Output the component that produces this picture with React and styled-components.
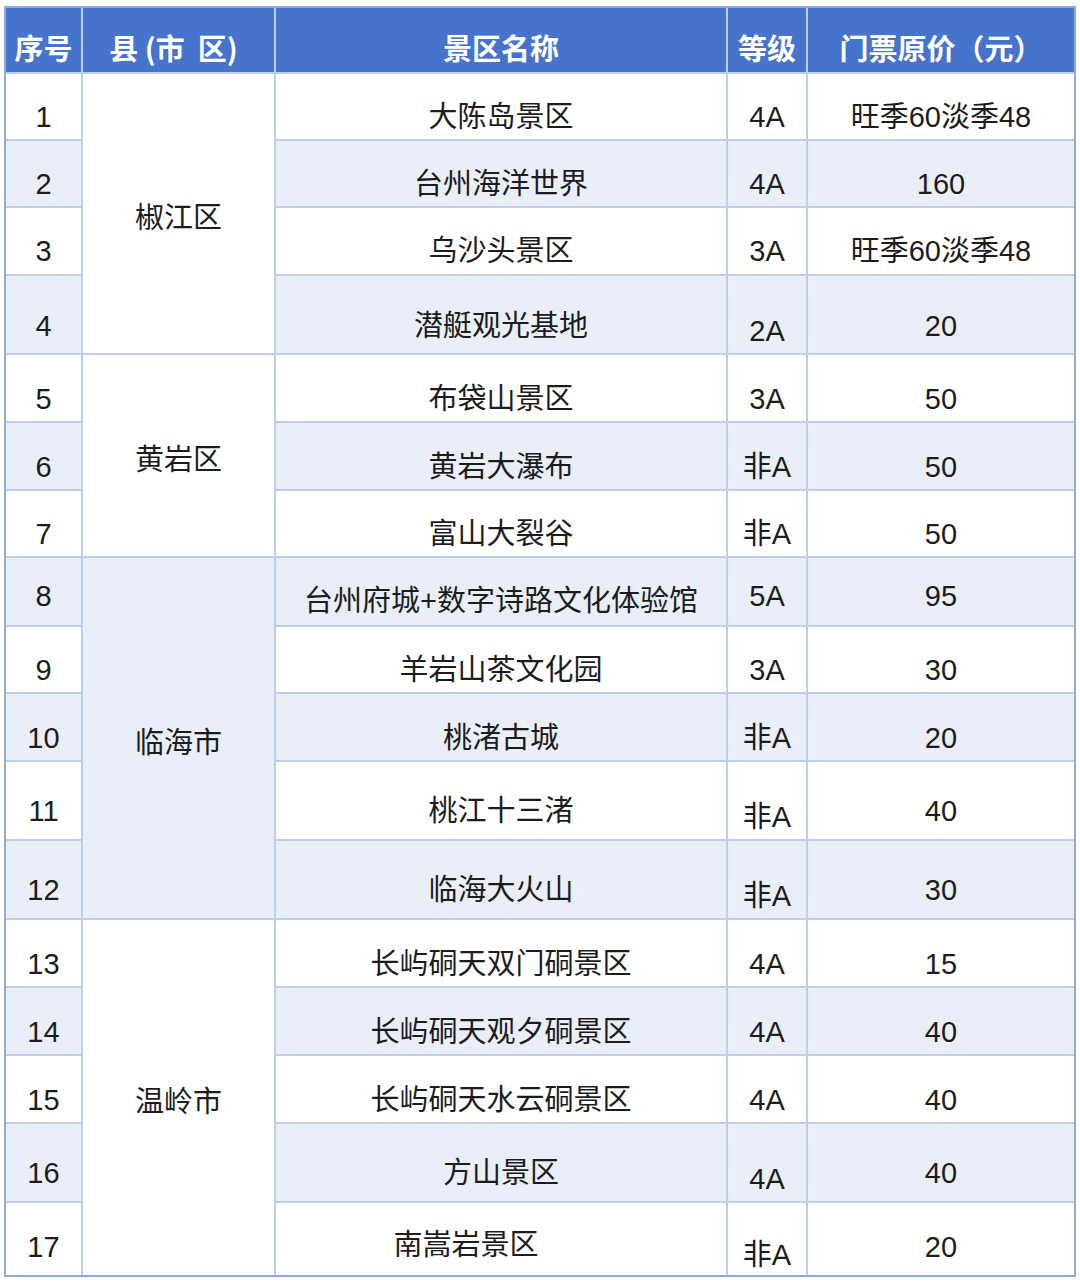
import React from "react";
import styled, { createGlobalStyle } from "styled-components";

const Global = createGlobalStyle`
  html, body { margin: 0; padding: 0; background: #ffffff; }
  body { font-family: "Liberation Sans", "Noto Sans CJK SC", sans-serif; }
`;

const Page = styled.div`
  padding: 6px 0 0 4px;
  background: #ffffff;
`;

const Table = styled.div`
  display: grid;
  width: fit-content;
  grid-template-columns: 75px 191px 450px 78px 266px;
  grid-template-rows: ${(p) => p.$rows.map((h) => `${h}px`).join(" ")};
  gap: 2px;
  border: 2px solid #8eaadf;
  background: #bccdee;
`;

const HeadCell = styled.div`
  grid-column: ${(p) => p.$col};
  grid-row: 1;
  background: #4674cc;
  color: #ffffff;
  font-family: "Noto Sans CJK SC", "Liberation Sans", sans-serif;
  font-weight: 700;
  font-size: 29px;
  line-height: 32px;
  display: flex;
  justify-content: center;
  align-items: flex-start;
  padding-top: 23px;
  padding-right: ${(p) => p.$shift || 0}px;
  box-sizing: border-box;
  white-space: pre;
`;

const Cell = styled.div`
  grid-column: ${(p) => p.$col};
  grid-row: ${(p) => p.$row} / span ${(p) => p.$span || 1};
  background: ${(p) => (p.$alt ? "#e9eef9" : "#ffffff")};
  color: #1c1c1c;
  font-size: 29px;
  line-height: 32px;
  display: flex;
  justify-content: center;
  align-items: ${(p) => (p.$middle ? "center" : "flex-start")};
  padding-top: ${(p) => p.$pt}px;
  padding-right: ${(p) => p.$shift || 0}px;
  box-sizing: border-box;
  white-space: nowrap;
`;

const heights = [64, 65, 65, 66, 77, 66, 66, 65, 67, 65, 66, 77, 77, 66, 66, 66, 77, 72];

const rows = [
  { no: "1", name: "大陈岛景区", grade: "4A", price: "旺季60淡季48", pt: 27 },
  { no: "2", name: "台州海洋世界", grade: "4A", price: "160", pt: 27 },
  { no: "3", name: "乌沙头景区", grade: "3A", price: "旺季60淡季48", pt: 27 },
  { no: "4", name: "潜艇观光基地", grade: "2A", price: "20", pt: 34, gradePt: 39 },
  { no: "5", name: "布袋山景区", grade: "3A", price: "50", pt: 28 },
  { no: "6", name: "黄岩大瀑布", grade: "非A", price: "50", pt: 28 },
  { no: "7", name: "富山大裂谷", grade: "非A", price: "50", pt: 27 },
  { no: "8", name: "台州府城+数字诗路文化体验馆", grade: "5A", price: "95", pt: 22, namePt: 27 },
  { no: "9", name: "羊岩山茶文化园", grade: "3A", price: "30", pt: 27 },
  { no: "10", name: "桃渚古城", grade: "非A", price: "20", pt: 28 },
  { no: "11", name: "桃江十三渚", grade: "非A", price: "40", pt: 33, gradePt: 39 },
  { no: "12", name: "临海大火山", grade: "非A", price: "30", pt: 33, gradePt: 39 },
  { no: "13", name: "长屿硐天双门硐景区", grade: "4A", price: "15", pt: 28 },
  { no: "14", name: "长屿硐天观夕硐景区", grade: "4A", price: "40", pt: 28 },
  { no: "15", name: "长屿硐天水云硐景区", grade: "4A", price: "40", pt: 28 },
  { no: "16", name: "方山景区", grade: "4A", price: "40", pt: 33, gradePt: 39 },
  { no: "17", name: "南嵩岩景区", grade: "非A", price: "20", pt: 28, namePt: 26, gradePt: 36, nameShift: 70 },
];

const districts = [
  { name: "椒江区", start: 1, span: 4 },
  { name: "黄岩区", start: 5, span: 3 },
  { name: "临海市", start: 8, span: 5 },
  { name: "温岭市", start: 13, span: 5 },
];

export default function App() {
  return (
    <Page>
      <Global />
      <Table $rows={heights}>
        <HeadCell $col={1}>序号</HeadCell>
        <HeadCell $col={2} $shift={10}>{"县 (市  区)"}</HeadCell>
        <HeadCell $col={3}>景区名称</HeadCell>
        <HeadCell $col={4}>等级</HeadCell>
        <HeadCell $col={5}>门票原价（元）</HeadCell>
        {districts.map((d) => (
          <Cell
            key={d.name}
            $col={2}
            $row={d.start + 1}
            $span={d.span}
            $alt={d.start % 2 === 0}
            $middle
            $pt={9}
          >
            {d.name}
          </Cell>
        ))}
        {rows.map((r, i) => {
          const row = i + 2;
          const alt = i % 2 === 1;
          return (
            <React.Fragment key={r.no}>
              <Cell $col={1} $row={row} $alt={alt} $pt={r.pt}>
                {r.no}
              </Cell>
              <Cell $col={3} $row={row} $alt={alt} $pt={r.namePt ?? r.pt} $shift={r.nameShift}>
                {r.name}
              </Cell>
              <Cell $col={4} $row={row} $alt={alt} $pt={r.gradePt ?? r.pt}>
                {r.grade}
              </Cell>
              <Cell $col={5} $row={row} $alt={alt} $pt={r.pt}>
                {r.price}
              </Cell>
            </React.Fragment>
          );
        })}
      </Table>
    </Page>
  );
}
